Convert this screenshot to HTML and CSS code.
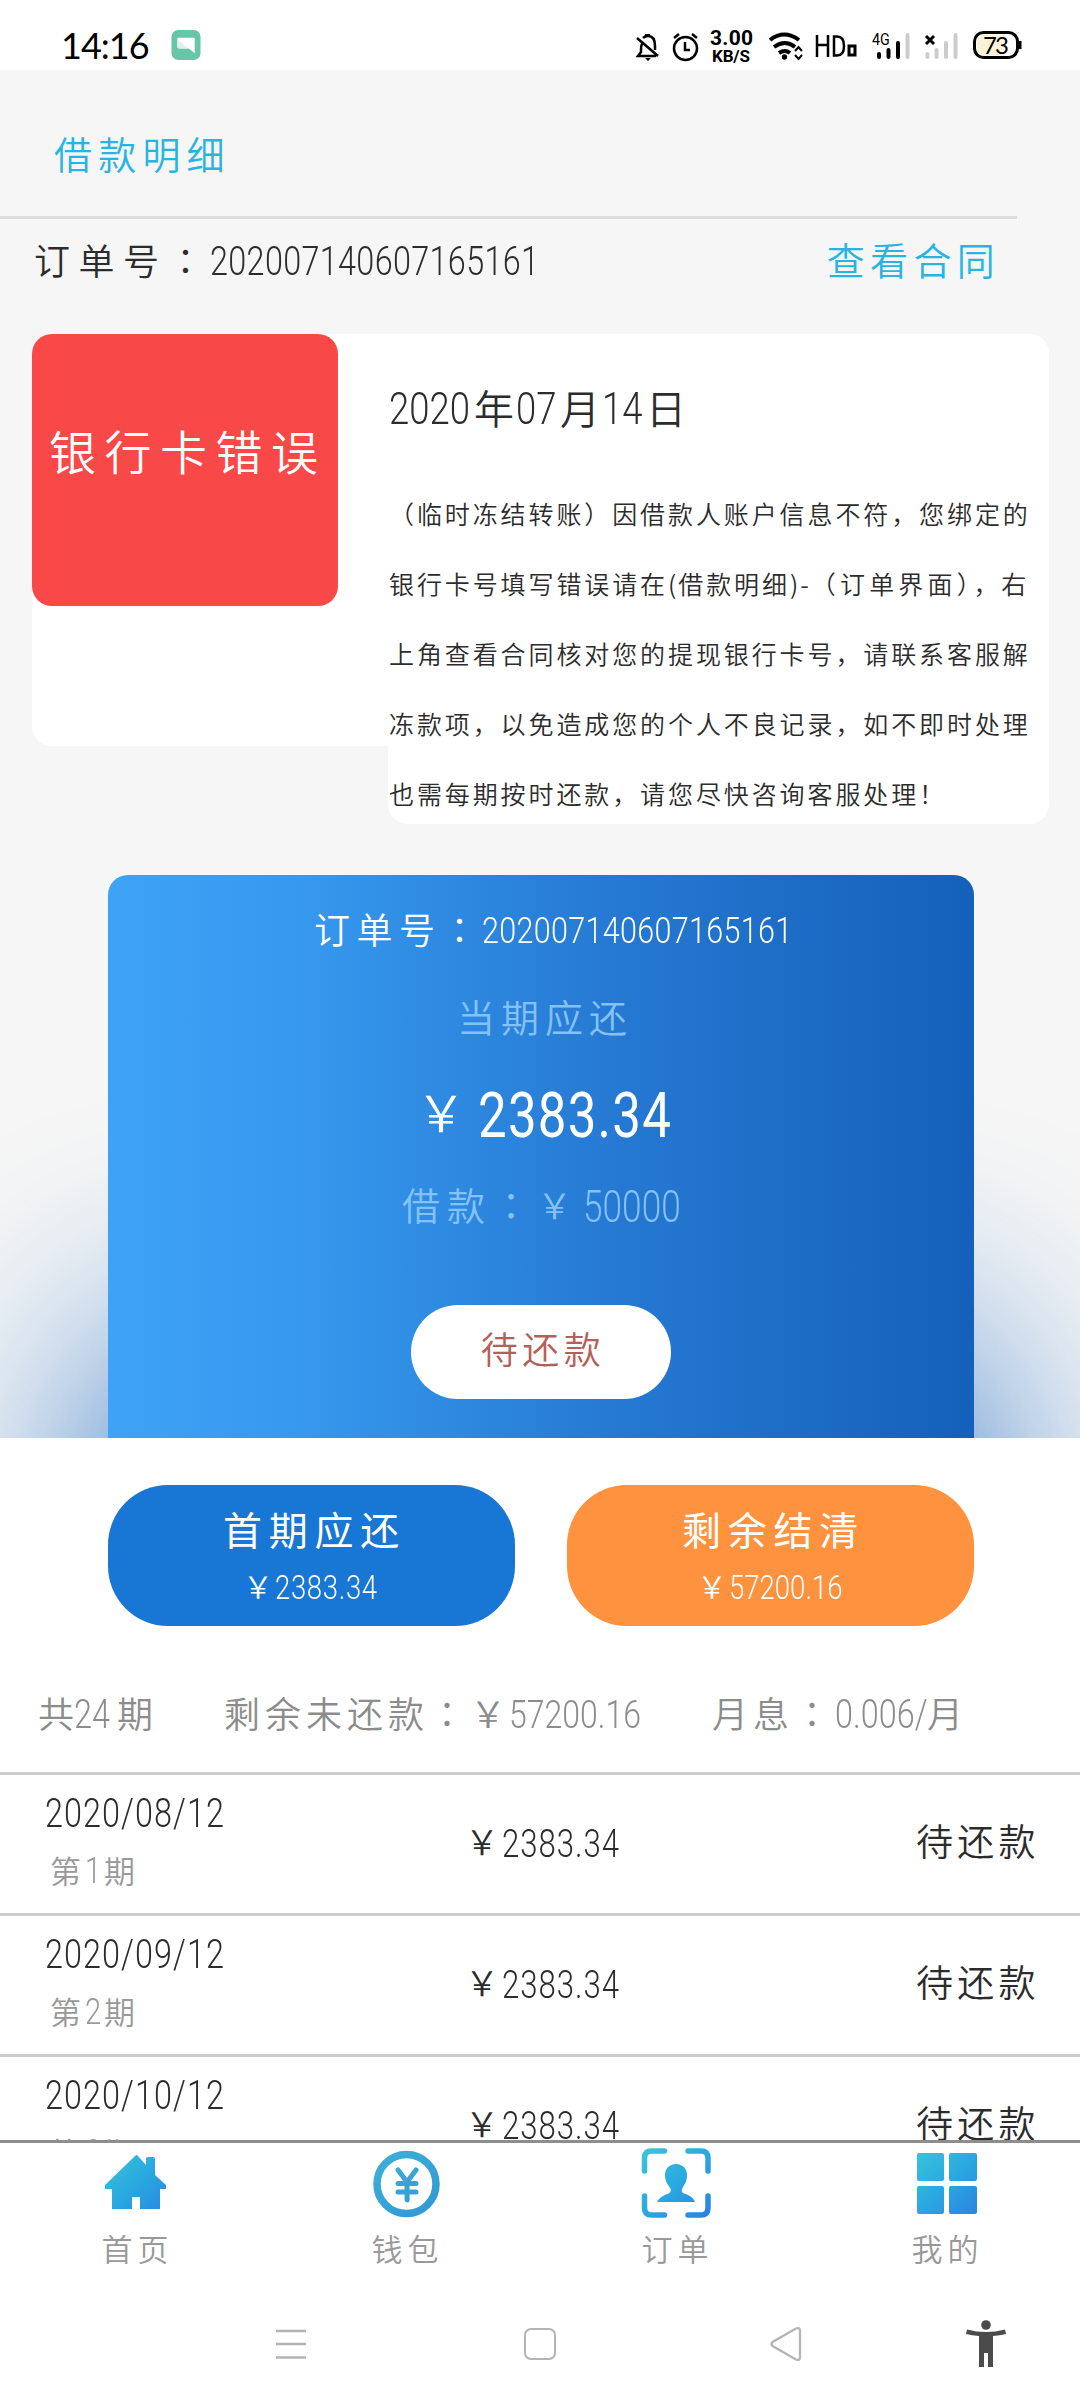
FILE: index.html
```html
<!DOCTYPE html>
<html lang="zh-CN">
<head>
<meta charset="utf-8">
<title>借款明细</title>
<link rel="stylesheet" href="styles.css">
</head>
<body>
<div class="app">
  <header class="status">
    <span class="clock">14:16</span>
    <svg class="chat" width="30" height="30" viewBox="0 0 30 31"><rect width="30" height="31" rx="7" fill="#68c5a8"/><path d="M7 8h16q1 0 1 1v15l-6-5H8q-2 0-2-2V9q0-1 1-1z" fill="#fff"/><path d="M6 10l18 14-6-5H8q-2 0-2-2z" fill="#def2eb"/></svg>
    <svg class="tray" width="400" height="70" viewBox="630 1 400 70" fill="none" stroke="#000" stroke-width="2.5">
      <path d="M643 43q-2 3-2 7v3l-3 4h18M643 39q2-2 5-2 7 0 7 10v4M637 39l21 18"/><path d="M645 35h5v3h-5zM645 59h6l-3 3z" fill="#000" stroke="none"/>
      <circle cx="685.500" cy="49.500" r="11.500"/><path d="M685 43v8h5M674 39l5-4M697 39l-5-4"/>
      <g fill="#000" stroke="none"><text class="speed" x="710" y="46" textLength="43">3.00</text><text class="unit" x="712" y="63" textLength="38">KB/S</text></g>
      <path stroke-width="4" d="M770 41q14-11 29 0M774 48q11-8 21 0M779 54q6-4 11 0"/><circle cx="784.500" cy="58" r="2.700" fill="#000" stroke="none"/><path stroke-width="2" d="M795 52l3.500-4 3.500 4M795 56l3.500 4 3.500-4"/>
      <path d="M817 36v22M828 36v22M817 46h11M834 37.500v19h3q7 0 7-9.500t-7-9.500z"/><path stroke-width="3" d="M849 47h6v9h-6z"/>
      <text class="net" transform="translate(872 46) scale(.84 1)" fill="#000" stroke="none">4G</text>
      <g stroke-width="4" stroke-linecap="round"><path d="M879 55v3M888.500 51v7M898 44v14"/><path stroke="#ccc" d="M907.500 36v22M927.500 55v3M936.500 51v7M946 44v14M955.500 36v22"/></g>
      <path stroke-width="3" d="M926 37l8 8M934 37l-8 8"/>
      <rect x="974.500" y="33.500" width="43" height="25" rx="9" fill="#fff" stroke-width="3"/><path d="M984 36h20v20h-20q-7 0-7-8v-4q0-8 7-8z" fill="#fff3d6" stroke="none"/><path d="M1020 42v8" stroke-width="3"/>
      <text class="batt" x="983" y="54.500" textLength="26" fill="#000" stroke="none">73</text>
    </svg>
  </header>

  <main class="page">
    <h1 class="title">借款明细</h1>
    <div class="order-row">
      <span class="t order-label">订单号<i lang="zh-Hant">：</i></span><span class="n order-no">202007140607165161</span>
      <a class="contract">查看合同</a>
    </div>

    <section class="notice">
      <div class="badge">银行卡错误</div>
      <div class="message">
        <div class="date"><span class="n year">2020</span>年<span class="n">07</span>月<span class="n">14</span>日</div>
        <p class="line">（临时冻结转账）因借款人账户信息不符，您绑定的</p>
        <p class="line">银行卡号填写错误请在<span class="half">(</span>借款明细<span class="half">)-</span><span class="paren">（订单界面）</span>，右</p>
        <p class="line">上角查看合同核对您的提现银行卡号，请联系客服解</p>
        <p class="line">冻款项，以免造成您的个人不良记录，如不即时处理</p>
        <p class="line">也需每期按时还款，请您尽快咨询客服处理！</p>
      </div>
    </section>

    <section class="bill-area">
      <div class="bill">
        <div class="bill-order"><span class="t">订单号<i lang="zh-Hant">：</i></span><span class="n">202007140607165161</span></div>
        <div class="bill-label">当期应还</div>
        <div class="bill-amount"><span class="yen">￥</span><span class="n">2383.34</span></div>
        <div class="bill-loan"><span>借款<i lang="zh-Hant">：</i></span><span class="yen">￥</span><span class="n">50000</span></div>
        <div class="pill">待还款</div>
      </div>
    </section>
  </main>

  <div class="actions">
    <div class="btn btn-first"><b>首期应还</b><div class="sum"><span class="yen">￥</span><span class="n">2383.34</span></div></div>
    <div class="btn btn-rest"><b>剩余结清</b><div class="sum wide"><span class="yen">￥</span><span class="n">57200.16</span></div></div>
  </div>

  <div class="summary">
    <span class="total">共<span class="n">24</span>期</span>
    <span class="remain">剩余未还款<i lang="zh-Hant">：</i><span class="yen">￥</span><span class="n">57200.16</span></span>
    <span class="rate">月息<i lang="zh-Hant">：</i><span class="n">0.006/</span>月</span>
  </div>

  <div class="list">
    <div class="row"><div class="when"><div class="day n">2020/08/12</div><div class="term">第<span class="n">1</span>期</div></div><div class="amt"><span class="yen">￥</span><span class="n">2383.34</span></div><div class="state">待还款</div></div>
    <div class="row"><div class="when"><div class="day n">2020/09/12</div><div class="term">第<span class="n">2</span>期</div></div><div class="amt"><span class="yen">￥</span><span class="n">2383.34</span></div><div class="state">待还款</div></div>
    <div class="row"><div class="when"><div class="day n">2020/10/12</div><div class="term">第<span class="n">3</span>期</div></div><div class="amt"><span class="yen">￥</span><span class="n">2383.34</span></div><div class="state">待还款</div></div>
  </div>

  <nav class="tabs">
    <div class="tab">
      <svg width="80" height="80" viewBox="0 0 80 80"><defs><linearGradient id="g" gradientUnits="userSpaceOnUse" x1="8" y1="8" x2="70" y2="72"><stop offset="0" stop-color="#3cc4d8"/><stop offset=".5" stop-color="#2aaae0"/><stop offset="1" stop-color="#2b85e0"/></linearGradient></defs><path fill="url(#g)" d="M40.500 12.500q1-1 2 0L51 22v-6q0-2 2-2h5q2 0 2 2v16l11 10v4h-6v20H45V54h-8v12H17V46h-7v-4z"/></svg>
      <span>首页</span>
    </div>
    <div class="tab">
      <svg width="80" height="80" viewBox="0 0 80 80" fill="none" stroke="url(#g2)"><defs><linearGradient id="g2" gradientUnits="userSpaceOnUse" x1="8" y1="8" x2="60" y2="76"><stop offset="0" stop-color="#3bb2d8"/><stop offset="1" stop-color="#3398d4"/></linearGradient></defs><ellipse cx="41.500" cy="41" rx="29.500" ry="29.500" stroke-width="7.500"/><path stroke-width="5" stroke-linecap="round" stroke-linejoin="round" d="M33 27l9 12 9-12M33 40.500h18M33 49h18"/><path stroke-width="5" stroke-linecap="round" d="M42 39l.1 18"/></svg>
      <span>钱包</span>
    </div>
    <div class="tab">
      <svg width="80" height="80" viewBox="0 0 80 80" fill="none" stroke="url(#g)" stroke-width="5.500" stroke-linecap="round"><path d="M9.500 28V15q0-7 7-7h13M53 8h13q7 0 7 7v13M73 53v12q0 7-7 7H53M29.500 72h-13q-7 0-7-7V53"/><path fill="url(#g)" stroke="none" d="M41 21c7 0 11 5 11 11 0 7-3 10-5 14-1 4 1 4 6 6 4 2 6 4 7 7H22c1-3 4-5 8-7 5-2 7-3 5-7-2-3-5-7-5-13 0-6 4-11 11-11z"/></svg>
      <span>订单</span>
    </div>
    <div class="tab">
      <svg width="80" height="80" viewBox="0 0 80 80" fill="url(#g)"><rect x="12" y="10" width="27" height="28" rx="2"/><rect x="44" y="10" width="28" height="28" rx="2"/><rect x="12" y="43" width="27" height="28" rx="2"/><rect x="44" y="43" width="28" height="28" rx="2"/></svg>
      <span>我的</span>
    </div>
  </nav>

  <footer class="sysnav">
    <svg width="32" height="32" viewBox="0 0 32 32" fill="none" stroke="#b4b4b4" stroke-width="2.500"><path d="M1 3h30M1 16h30M1 29.500h30"/></svg>
    <svg width="32" height="32" viewBox="0 0 32 32" fill="none" stroke="#b4b4b4" stroke-width="2"><rect x="1" y="1" width="30" height="30" rx="6"/></svg>
    <svg width="32" height="36" viewBox="0 0 32 36" fill="none" stroke="#b4b4b4" stroke-width="2.300" stroke-linejoin="round"><path d="M2.500 16L26 2.500q4-1.500 4 2v27q0 3.500-4 2L2.500 20q-2-2 0-4z"/></svg>
    <svg width="40" height="48" viewBox="0 0 40 48" fill="#4b4b4b"><circle cx="20" cy="5" r="4.800"/><path d="M1 9.500q19 5 38 0l1 4.500q-6 1.500-13 2V47h-5V33h-4v14h-5V16q-7-.5-13-2z"/></svg>
  </footer>
</div>
</body>
</html>
```
FILE: styles.css
```css
* { box-sizing: border-box; }
body { margin: 0; background: #fff; }
.app { width: 1080px; height: 2400px; overflow: hidden; display: flex; flex-direction: column; background: #fff; color: #2c2c2c; font-family: "Noto Sans CJK SC", sans-serif; font-weight: 350; white-space: nowrap; }
svg { display: block; flex: none; }
p, h1 { margin: 0; font-weight: inherit; }
i { font-style: normal; font-family: "Noto Sans CJK TC", sans-serif; }

/* digits are set in a condensed face: laid out at their final width, drawn scaled */
.n { display: inline-block; flex: none; font-family: Roboto, sans-serif; font-weight: 350; letter-spacing: 0; transform: scaleX(.81); transform-origin: 0 50%; }
.yen { display: inline-block; flex: none; letter-spacing: 0; }

.status { height: 70px; flex: none; display: flex; align-items: flex-start; color: #000; }
.clock { width: 171px; padding-left: 61px; font: 36px/91px Lato, sans-serif; letter-spacing: -1px; }
.chat { margin-top: 30px; }
.tray { margin-left: 429px; }
.speed { font: bold 21px Roboto, sans-serif; }
.unit { font: bold 17px Roboto, sans-serif; }
.net { font: 17px Roboto, sans-serif; }
.batt { font: 24px Lato, sans-serif; }

.page { height: 1368px; flex: none; display: flex; flex-direction: column; background: #f6f6f6; }
.title { width: 1017px; height: 149px; padding: 57px 0 0 54px; border-bottom: 3px solid #ddd; font-size: 38px; line-height: 52px; letter-spacing: 6.2px; color: #28b4e0; }
.order-row { height: 115px; display: flex; padding: 13px 80px 0 34px; font-size: 36px; line-height: 54px; }
.order-label { width: 176px; letter-spacing: 8.5px; }
.order-no { width: 330px; font-size: 40px; line-height: 60px; letter-spacing: .4px; }
.contract { margin-left: auto; font-size: 38px; letter-spacing: 5.3px; color: #28b4e0; }

.notice { width: 1017px; height: 412px; margin-left: 32px; flex: none; display: flex; gap: 50px; align-items: flex-start; background: #fff; border-radius: 20px; }
.badge { width: 306px; height: 272px; border-radius: 20px; background: #f84848; color: #fff; font-size: 47px; line-height: 232px; letter-spacing: 8.5px; padding-left: 17px; }
.message { width: 661px; height: 490px; padding: 44px 0 0 1px; background: #fff; border-radius: 20px; }
.date { height: 101px; font-size: 40px; line-height: 58px; letter-spacing: 2px; }
.date .n { font-size: 45px; width: 44px; }
.date .year { width: 85px; }
.line { height: 70px; font-size: 25px; line-height: 68px; letter-spacing: 2.9px; }
.half { letter-spacing: 2px; }
.paren { letter-spacing: 4.2px; }

.bill-area { height: 563px; margin-top: 129px; padding: 0 106px 0 108px; position: relative; clip-path: inset(-300px 0 0 0); }
.bill-area::before { content: ""; position: absolute; left: 98px; top: 475px; width: 886px; height: 640px; background: #1464c0; opacity: .93; filter: blur(120px); }
.bill { position: relative; height: 563px; border-radius: 20px 20px 0 0; background: linear-gradient(90deg, #3ea2f7 0%, #379af0 20%, #2578d1 60%, #1460ba 100%); display: flex; flex-direction: column; align-items: center; color: #fff; }
.bill-order { height: 104px; padding: 26px 0 0 24px; font-size: 36px; line-height: 54px; display: flex; }
.bill-order .t { width: 168px; letter-spacing: 6.5px; word-spacing: 0; }
.bill-order .n { width: 310px; font-size: 37.7px; line-height: 58px; letter-spacing: .4px; }
.bill-label { height: 80px; font-size: 38px; line-height: 74px; letter-spacing: 6px; color: #84c2f6; padding-left: 8px; }
.bill-amount { height: 100px; display: flex; line-height: 114px; font-size: 50px; padding-left: 8px; }
.bill-amount .yen { width: 62px; line-height: 102px; }
.bill-amount .n { width: 196px; font-size: 63px; letter-spacing: 1.5px; font-weight: 400; }
.bill-loan { height: 100px; display: flex; font-size: 38px; line-height: 90px; letter-spacing: 7px; color: #84c2f6; padding-left: 6px; }
.bill-loan .yen { width: 46px; font-size: 35px; }
.bill-loan .n { width: 103px; font-size: 43.5px; line-height: 98px; }
.pill { width: 260px; height: 94px; margin-top: 46px; border-radius: 47px; background: #fff; color: #b4605a; font-size: 37px; line-height: 86px; letter-spacing: 4.5px; text-align: center; padding-left: 4px; }

.actions { height: 188px; padding: 47px 106px 0 108px; flex: none; display: flex; gap: 52px; }
.btn { width: 407px; height: 141px; border-radius: 60px; color: #fff; display: flex; flex-direction: column; align-items: center; }
.btn-first { background: #1876d4; }
.btn-rest { background: #ff923e; }
.btn b { font-weight: 400; font-size: 39px; line-height: 56px; letter-spacing: 6.8px; margin-top: 15px; padding-left: 6px; }
.sum { display: flex; font-size: 30px; line-height: 48px; margin-top: 5px; }
.sum .yen { width: 32px; }
.sum .n { width: 105px; font-size: 34px; line-height: 52px; letter-spacing: .8px; }
.wide .n { width: 115px; letter-spacing: 0; }

.summary { height: 146px; flex: none; display: flex; align-items: center; padding-top: 28px; color: #8c8c8c; font-size: 36px; line-height: 54px; }
.summary .n { font-size: 40px; width: 43px; }
.total { width: 186px; margin-left: 38px; }
.remain { width: 488px; letter-spacing: 5px; }
.remain .yen { width: 39px; }
.summary .remain .n { width: 130px; font-size: 39.5px; }
.rate { letter-spacing: 5px; }
.summary .rate .n { width: 92px; font-size: 40px; }

.list { height: 368px; flex: none; overflow: hidden; display: flex; flex-direction: column; }
.row { height: 141px; flex: none; border-top: 3px solid #ccc; display: grid; grid-template-columns: 462px 1fr 164px; }
.when { padding: 14px 0 0 45px; }
.day { width: 180px; display: block; font-size: 40px; line-height: 50px; letter-spacing: 1.3px; }
.term { color: #999; font-size: 31px; line-height: 56px; margin-top: 3px; padding-left: 5px; }
.term .n { font-size: 36px; width: 17px; margin: 0 2px 0 4px; line-height: 50px; }
.amt { display: flex; font-size: 34px; line-height: 131px; }
.amt .yen { width: 40px; text-align: center; }
.amt .n { width: 120px; font-size: 38.5px; line-height: 138px; letter-spacing: 1.2px; }
.state { font-size: 37px; line-height: 131px; letter-spacing: 4.2px; }

.tabs { height: 138px; flex: none; border-top: 3px solid #8b8e8d; display: flex; align-items: flex-start; }
.tab { width: 270px; display: flex; flex-direction: column; align-items: center; color: #999; font-size: 31px; line-height: 50px; letter-spacing: 5px; }
.tab span { padding-left: 5px; }
.sysnav { height: 122px; display: flex; align-items: flex-start; padding: 51px 74px 0 275px; }
.sysnav svg { margin-top: -1px; }
.sysnav svg:nth-child(2) { margin-left: 217px; }
.sysnav svg:nth-child(3) { margin: -3px 0 0 214px; }
.sysnav svg:nth-child(4) { margin: -9px 0 0 164px; }
```
